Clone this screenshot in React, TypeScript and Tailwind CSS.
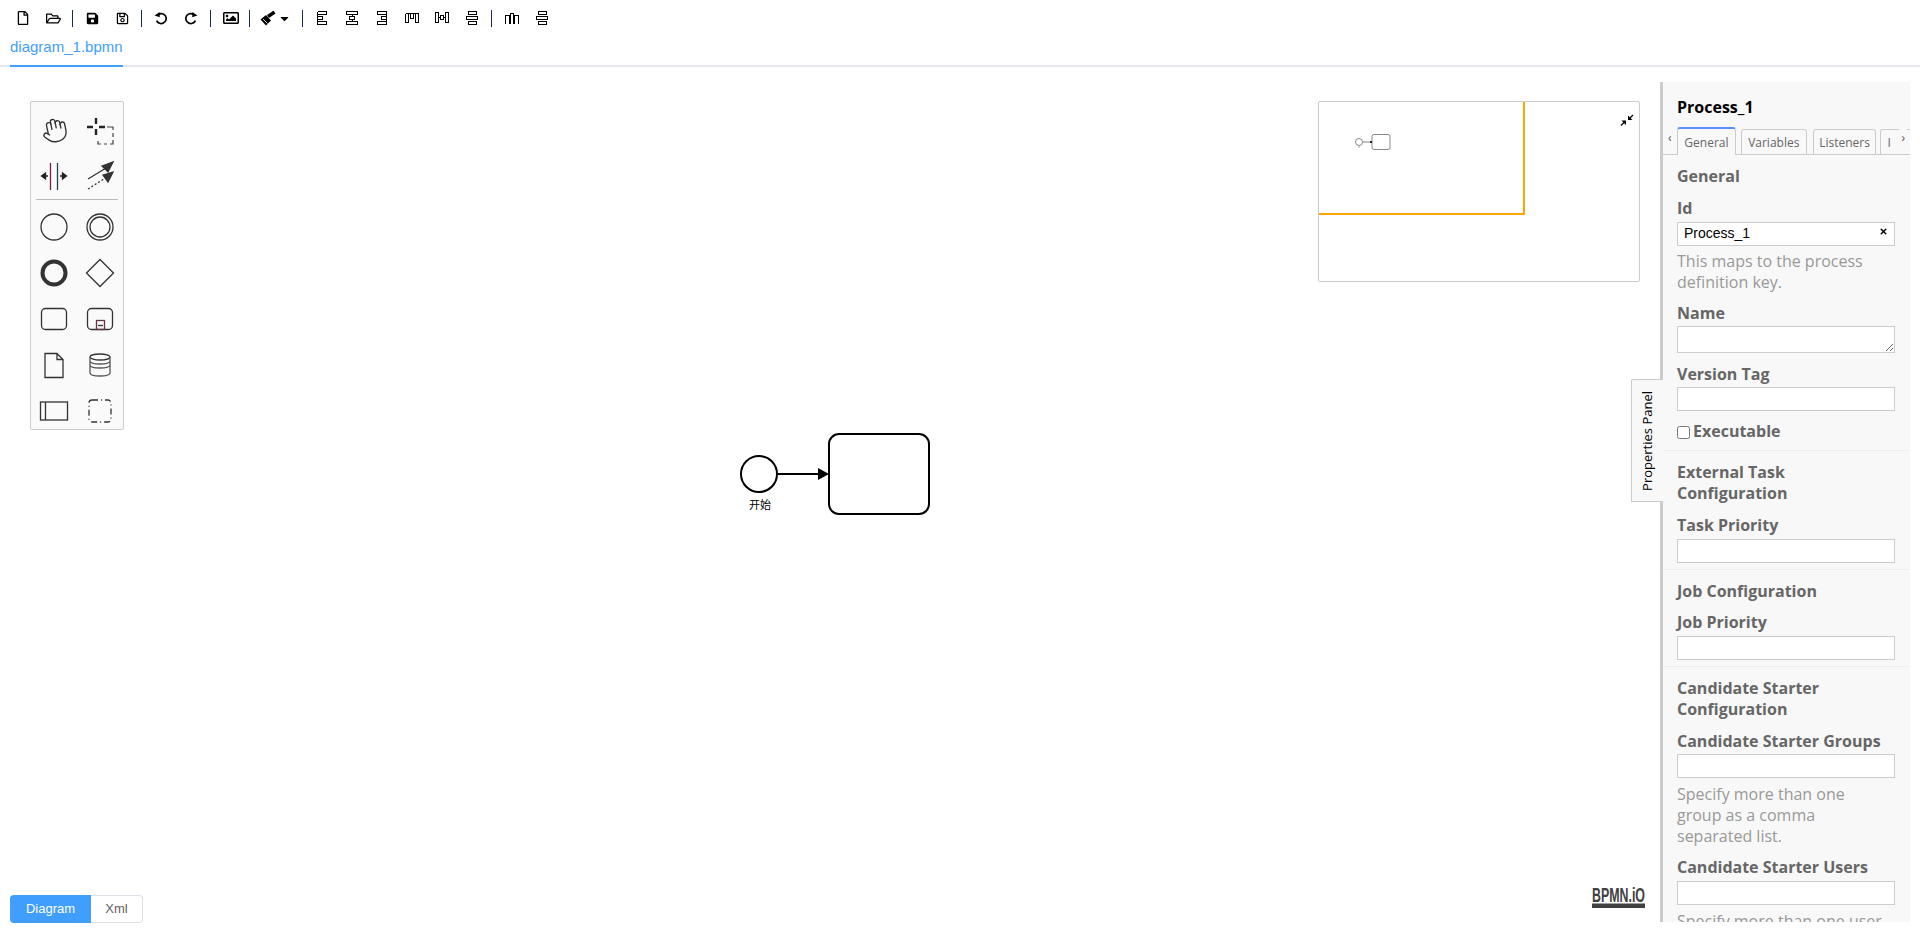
import React from "react";
import { FaRegFile, FaRegFolderOpen, FaSave, FaRegSave, FaRegImage, FaCaretDown } from "react-icons/fa";
import { X, Hand } from "lucide-react";

const Btn = ({ children, w = "w-[30px]" }: { children: React.ReactNode; w?: string }) => (
  <div className={`${w} h-[16px] flex items-center justify-center text-black`}>{children}</div>
);
const Sep = ({ ml, mr }: { ml: string; mr: string }) => <div className={`w-px h-[17px] bg-[#1a2a55] ${ml} ${mr}`} />;

const A = ({ children }: { children: React.ReactNode }) => (
  <svg width="16" height="16" viewBox="0 0 16 16" fill="none" stroke="#000" strokeWidth="1" shapeRendering="crispEdges">{children}</svg>
);
const alignLeft = <A><path d="M3.5 1.5v13M3.5 1.5h9v3h-9M3.5 6.5h5v3h-5M3.5 11.5h9v3h-9" /></A>;
const alignCenter = <A><path d="M2.5 1.5h11v3h-11zM5.5 6.5h5v3h-5zM2.5 11.5h11v3h-11zM8 4.5v2M8 9.5v2" /></A>;
const alignRight = <A><path d="M12.5 1.5v13M12.5 1.5h-9v3h9M12.5 6.5h-5v3h5M12.5 11.5h-9v3h9" /></A>;
const alignTop = <A><path d="M1.5 3.5h13M1.5 3.5v9h3v-9M6.5 3.5v5h3v-5M11.5 3.5v9h3v-9" /></A>;
const alignMiddle = <A><path d="M1.5 2.5h3v10h-3zM6.5 5.5h3v4h-3zM11.5 2.5h3v10h-3zM4.5 7.5h2M9.5 7.5h2" /></A>;
const alignBottom = <A><path d="M4.5 1.5h8v3h-8zM2.5 6.5h11v3h-11zM4.5 11.5h8v3h-8z" /></A>;
const distH = <A><path d="M1.5 13.5v-8h4v8M6.5 13.5v-10h3v10M10.5 13.5v-8h4v8M5.5 7.5h1M9.5 7.5h1" /></A>;
const distV = <A><path d="M4.5 1.5h8v3h-8zM2.5 6.5h11v3h-11zM4.5 11.5h8v3h-8z" /></A>;
const Undo = ({ flip }: { flip?: boolean }) => (
  <svg width="14" height="14" viewBox="0 0 14 14" className={flip ? "-scale-x-100" : ""} fill="none" stroke="#000">
    <path d="M4.6 3.3A5 5 0 1 1 2.6 9.6" strokeWidth="1.7" />
    <path d="M0.6 4.6L5.6 1 5.8 6.2z" fill="#000" stroke="none" />
  </svg>
);
const Brush = () => (
  <svg width="17" height="15" viewBox="0 0 17 15">
    <path d="M0.5 8.5L6 4l5 5.5-5 5z" fill="#000" />
    <path d="M8 5.5L14.5 1" stroke="#000" strokeWidth="3.4" />
    <path d="M3 8l4.5 4.5" stroke="#fff" strokeWidth="0.8" />
  </svg>
);

const P = ({ children }: { children: React.ReactNode }) => (
  <div className="w-[46px] h-[46px] flex items-center justify-center">
    <svg width="34" height="34" viewBox="0 0 34 34" fill="none" stroke="#333" strokeWidth="1.3">{children}</svg>
  </div>
);

const Label = ({ children, mt = "mt-[11px]" }: { children: React.ReactNode; mt?: string }) => (
  <div className={`${mt} text-[16px] leading-[21px] font-bold text-[#666]`}>{children}</div>
);
const Field = ({ label, desc, mt = "mt-[11px]", gap = "mt-[3px]" }: { label: string; desc?: string; mt?: string; gap?: string }) => (
  <div>
    <Label mt={mt}>{label}</Label>
    <input readOnly className={`block ${gap} w-[218px] h-[24px] border border-[#ccc] bg-white`} />
    {desc && <div className="mt-[6px] max-w-[205px] text-[16px] leading-[21px] text-[#999]">{desc}</div>}
  </div>
);

export default function App() {
  return (
    <div className="w-[1920px] h-[930px] overflow-hidden bg-white flex flex-col font-['Liberation_Sans',sans-serif]">
      <div className="h-[34px] flex items-center pl-[8px] pt-[2px] text-[14px]">
        <Btn><FaRegFile size={14} /></Btn>
        <Btn><FaRegFolderOpen size={15} /></Btn>
        <Sep ml="ml-[4px]" mr="mr-[4px]" />
        <Btn><FaSave size={13} /></Btn>
        <Btn><FaRegSave size={13} /></Btn>
        <Sep ml="ml-[4px]" mr="mr-[4px]" />
        <Btn><Undo /></Btn>
        <Btn><Undo flip /></Btn>
        <Sep ml="ml-[4px]" mr="mr-[5px]" />
        <Btn><FaRegImage size={16} /></Btn>
        <Sep ml="ml-[3px]" mr="mr-[3px]" />
        <Btn w="w-[44px]"><Brush /><FaCaretDown size={13} className="ml-[1px]" /></Btn>
        <Sep ml="ml-[5px]" mr="mr-[4px]" />
        <Btn>{alignLeft}</Btn>
        <Btn>{alignCenter}</Btn>
        <Btn>{alignRight}</Btn>
        <Btn>{alignTop}</Btn>
        <Btn>{alignMiddle}</Btn>
        <Btn>{alignBottom}</Btn>
        <Sep ml="ml-[4px]" mr="mr-[5px]" />
        <Btn>{distH}</Btn>
        <Btn>{distV}</Btn>
      </div>

      <div className="h-[33px] border-b-2 border-[#e4e7ed] px-[10px]">
        <div className="w-[113px] h-[33px] border-b-2 border-[#409eff] text-[15px] leading-[26px] text-[#409eff]">diagram_1.bpmn</div>
      </div>

      <div className="flex-1 flex min-h-0">
        <div className="relative flex-1 flex flex-col">
          <svg className="absolute inset-0 w-full h-full" viewBox="0 67 1660 863" fill="none" stroke="#000" strokeWidth="2">
            <circle cx="759" cy="474" r="18" fill="#fff" />
            <rect x="829" y="434" width="100" height="80" rx="10" fill="#fff" />
            <path d="M778 474H820" />
            <path d="M818 468l11 6-11 6z" fill="#000" stroke="none" />
            <text x="760" y="509" textAnchor="middle" fontSize="11" fill="#000" stroke="none" fontFamily="'Noto Sans CJK SC',sans-serif">开始</text>
          </svg>

          <div className="absolute left-[30px] top-[34px] w-[94px] h-[329px] box-border border border-[#ccc] rounded-[2px] bg-[#fafafa] pt-[5px]">
            <div className="grid grid-cols-2 w-[92px]">
              <div className="w-[46px] h-[46px] flex items-center justify-center text-[#333]"><Hand size={27} strokeWidth={1.2} className="-rotate-[12deg]" /></div>
              <P>
                <path d="M13 5v6M13 16v6M4 14h6M16 14h6" stroke="#222" strokeWidth="2.4" />
                <path d="M24 14h6v3M30 20v4M30 27v4h-3M24 31h-3M18 31h-3v-3" stroke="#444" strokeWidth="1.2" />
              </P>
              <P>
                <path d="M13.5 4v27" stroke="#7a1f4c" />
                <path d="M20.5 4v27" stroke="#245" />
                <path d="M11 17H8M8.5 14l-4 3 4 3z" fill="#222" stroke="#222" />
                <path d="M23 17h3M25.5 14l4 3-4 3z" fill="#222" stroke="#222" />
              </P>
              <P>
                <path d="M5 20L23 9" />
                <path d="M19 7l11-4-5 10z" fill="#333" />
                <path d="M5 30l19-12" strokeDasharray="2 2" />
                <path d="M20 16l10-3-5 10z" fill="#333" />
              </P>
            </div>
            <div className="h-px bg-[#bbb] mx-[5px]" />
            <div className="grid grid-cols-2 w-[92px] mt-[4px]">
              <P><circle cx="17" cy="17" r="13" /></P>
              <P><circle cx="17" cy="17" r="13" /><circle cx="17" cy="17" r="10" /></P>
              <P><circle cx="17" cy="17" r="11.5" strokeWidth="4" /></P>
              <P><path d="M17 3.5L30.5 17 17 30.5 3.5 17z" /></P>
              <P><rect x="4.5" y="6.5" width="25" height="21" rx="4" /></P>
              <P><rect x="4.5" y="6.5" width="25" height="21" rx="4" /><rect x="13.5" y="18.5" width="8" height="9" stroke="#634" /><path d="M15 23.5h5" /></P>
              <P><path d="M8 5.5h12l6 6v18H8zM20 5.5v6h6" /></P>
              <P><ellipse cx="17" cy="9" rx="10" ry="3" /><path d="M7 9v16c0 4 20 4 20 0V9M7 13c0 4 20 4 20 0M7 17c0 4 20 4 20 0" stroke="#555" /></P>
              <P><rect x="3.5" y="8" width="27" height="18" /><path d="M8.5 8v18" /></P>
              <P><rect x="6" y="6" width="22" height="22" rx="3" strokeDasharray="6 3 1 3" /></P>
            </div>
          </div>

          <div className="absolute left-[1318px] top-[34px] w-[322px] h-[181px] box-border border border-[#ccc] rounded-[2px] bg-white overflow-hidden">
            <svg className="absolute inset-0" width="320" height="179" viewBox="1319 102 320 179" fill="none">
              <path d="M1319 214H1524V102" stroke="#ffa500" strokeWidth="2" />
              <circle cx="1359" cy="142" r="3.5" stroke="#888" />
              <path d="M1363 142h8" stroke="#888" />
              <rect x="1372" y="134.5" width="18" height="15" rx="2" stroke="#888" />
              <path d="M1370 141h2v2h-2z" fill="#222" />
              <path d="M1358 147h2" stroke="#c99" />
              <path d="M1628 120v-4.5l4.5 4.5zM1626 120.5h-4.5l4.5 4.5z" fill="#000" />
              <path d="M1630 118l3-3M1624 122.5l-3 3" stroke="#000" strokeWidth="1.2" />
            </svg>
          </div>

          <div className="absolute right-[-3px] top-[312px] z-10 w-[32px] h-[123px] box-border border border-r-0 border-[#ccc] rounded-tl-[2px] bg-[#f8f8f8] flex items-center justify-center">
            <span className="[writing-mode:vertical-rl] rotate-180 font-['Open_Sans',sans-serif] text-[13px] text-black">Properties Panel</span>
          </div>

          <div className="absolute right-[15px] bottom-[22px] w-[53px]">
            <svg width="53" height="21" viewBox="0 0 53 21">
              <text x="0" y="15" fontSize="20" fontWeight="700" textLength="53" lengthAdjust="spacingAndGlyphs" fill="#404040" fontFamily="'Liberation Sans',sans-serif">BPMN.iO</text>
              <rect x="0" y="16.5" width="53" height="4.5" fill="#404040" />
            </svg>
          </div>

          <div className="flex-1" />
          <div className="pl-[10px] pb-[7px] flex text-[13px]">
            <div className="w-[81px] h-[28px] bg-[#409eff] text-white rounded-l-[4px] flex items-center justify-center">Diagram</div>
            <div className="w-[52px] h-[28px] box-border border border-l-0 border-[#dcdfe6] text-[#606266] rounded-r-[4px] flex items-center justify-center">Xml</div>
          </div>
        </div>

        <div className="w-[250px] mr-[10px] mt-[15px] mb-[8px] box-border border-l-[3px] border-[#ccc] bg-[#f8f8f8] overflow-hidden font-['Open_Sans',sans-serif]">
          <div className="pl-[14px] pt-[14px] h-[45px] text-[16px] leading-[22px] font-bold text-black">Process_1</div>
          <div className="h-[28px] border-b border-[#ccc] flex relative pl-[14px] text-[12px] text-[#666]">
            <span className="absolute left-[5px] top-[2px] text-[#555]">‹</span>
            <div className="w-[60px] h-[28px] box-border border border-[#ccc] border-t-2 border-t-[#5b8eff] border-b-0 bg-[#f8f8f8] rounded-t-[3px] pt-[1px] flex items-center justify-center">General</div>
            <div className="ml-[5px] w-[67px] h-[26px] mt-[2px] box-border border border-[#ccc] border-b-0 rounded-t-[3px] flex items-center justify-center">Variables</div>
            <div className="ml-[6px] w-[65px] h-[26px] mt-[2px] box-border border border-[#ccc] border-b-0 rounded-t-[3px] flex items-center justify-center">Listeners</div>
            <div className="ml-[4px] w-[30px] h-[26px] mt-[2px] box-border border border-r-0 border-[#ccc] border-b-0 rounded-tl-[3px] pl-[6px] flex items-center">I</div>
            <span className="absolute right-[3px] top-[2px] text-[#555] bg-[#f8f8f8] px-[2px]">›</span>
          </div>
          <div className="px-[14px]">
            <Label mt="mt-[11px]">General</Label>
            <div>
              <Label>Id</Label>
              <div className="relative mt-[1px] w-[218px] h-[24px]">
                <input readOnly defaultValue="Process_1" className="w-full h-full box-border border border-[#ccc] bg-white pl-[6px] pb-[1px] text-[14px] text-black font-['Liberation_Sans',sans-serif]" />
                <X size={9} strokeWidth={4} className="absolute right-[7px] top-[7px] text-black" />
              </div>
              <div className="mt-[7px] max-w-[205px] text-[16px] leading-[21px] text-[#999]">This maps to the process definition key.</div>
            </div>
            <Label mt="mt-[10px]">Name</Label>
            <textarea readOnly className="block mt-[2px] w-[218px] h-[27px] border border-[#ccc] bg-white resize" />
            <Field label="Version Tag" gap="mt-[2px]" />
            <label className="flex items-center mt-[10px] h-[21px] pb-[8px] box-content">
              <input type="checkbox" className="m-0 w-[13px] h-[13px] mr-[3px] mt-[2px]" />
              <span className="text-[16px] leading-[21px] font-bold text-[#666]">Executable</span>
            </label>
          </div>
          <div className="h-px bg-[#eee]" />
          <div className="px-[14px] pb-[6px]">
            <Label>External Task Configuration</Label>
            <Field label="Task Priority" mt="mt-[11px]" gap="mt-[3px]" />
          </div>
          <div className="h-px bg-[#eee]" />
          <div className="px-[14px] pb-[6px]">
            <Label>Job Configuration</Label>
            <Field label="Job Priority" mt="mt-[10px]" gap="mt-[3px]" />
          </div>
          <div className="h-px bg-[#eee]" />
          <div className="px-[14px]">
            <Label>Candidate Starter Configuration</Label>
            <Field label="Candidate Starter Groups" gap="mt-[2px]" desc="Specify more than one group as a comma separated list." />
            <Field label="Candidate Starter Users" mt="mt-[10px]" gap="mt-[3px]" desc="Specify more than one user as a comma separated list." />
          </div>
        </div>
      </div>
    </div>
  );
}
